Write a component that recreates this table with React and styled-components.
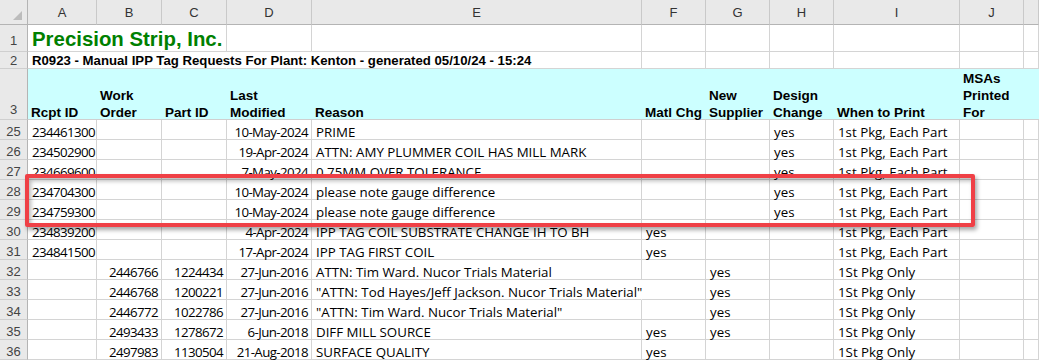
import React from 'react';
import styled, { createGlobalStyle } from 'styled-components';

const COLS = '28px 69px 65px 65px 85px 330px 64px 64px 64px 126px 64px 1fr';
const GRID = '#d4d4d4';

const GlobalStyle = createGlobalStyle`
  html, body { margin: 0; padding: 0; background: #ffffff; overflow: hidden; }
  * { box-sizing: border-box; }
`;

const Sheet = styled.div`
  position: relative;
  width: 1039px;
  background: #ffffff;
`;

const Row = styled.div`
  display: grid;
  grid-template-columns: ${COLS};
  height: ${(p) => p.$h}px;
`;

const Corner = styled.div`
  background: #e9e9e9;
  border-right: 1px solid #b4b4b4;
  border-bottom: 1px solid #b4b4b4;
  display: flex;
  align-items: flex-end;
  justify-content: flex-end;
  padding: 0 5px 4px 0;
`;

const ColLetter = styled.div`
  background: #e9e9e9;
  border-right: 1px solid #c9c9c9;
  border-bottom: 1px solid #b4b4b4;
  display: flex;
  align-items: center;
  justify-content: center;
  padding-top: 1px;
  font: 13px "Liberation Sans", Arial, sans-serif;
  color: #333333;
`;

const RowNum = styled.div`
  background: #e9e9e9;
  border-right: 1px solid #b4b4b4;
  border-bottom: 1px solid #cfcfcf;
  display: flex;
  align-items: flex-end;
  justify-content: center;
  padding-bottom: ${(p) => p.$pb ?? 0}px;
  font: 13px/13px "Liberation Sans", Arial, sans-serif;
  color: #444444;
`;

const Cell = styled.div`
  position: relative;
  display: flex;
  align-items: flex-end;
  justify-content: ${(p) => (p.$align === 'right' ? 'flex-end' : 'flex-start')};
  border-right: 1px solid ${(p) => (p.$noRight ? 'transparent' : GRID)};
  border-bottom: 1px solid ${GRID};
  padding: 0 3px ${(p) => p.$pb ?? 0}px ${(p) => (p.$align === 'right' ? 3 : 4)}px;
  white-space: nowrap;
  min-width: 0;
  font: 13.3px/13px "Open Sans", "Noto Sans", sans-serif;
  letter-spacing: ${(p) => (p.$num ? '-0.6px' : '0')};
  color: #000000;
`;

const Title = styled.span`
  font: bold 20.4px/20px "Liberation Sans", Arial, sans-serif;
  color: #008000;
`;

const Subtitle = styled.span`
  font: bold 13.2px/13px "Liberation Sans", Arial, sans-serif;
  color: #000000;
`;

const HeadCell = styled.div`
  background: #ccffff;
  border-bottom: 1px solid #d0d0d0;
  display: flex;
  align-items: flex-end;
  padding: 0 3px;
  white-space: nowrap;
  min-width: 0;
`;

const HeadText = styled.span`
  font: bold 13.5px/17px "Liberation Sans", Arial, sans-serif;
  color: #000000;
  margin-bottom: -2px;
`;

const Highlight = styled.div`
  position: absolute;
  left: 25px;
  top: 174px;
  width: 950px;
  height: 53px;
  border: 4px solid #ef4046;
  border-radius: 2px;
  box-shadow: 2px 3px 4px rgba(0, 0, 0, 0.35), inset 2px 3px 4px rgba(0, 0, 0, 0.28);
  pointer-events: none;
`;

const Triangle = () => (
  <svg width="9" height="9" viewBox="0 0 9 9">
    <polygon points="9,0 9,9 0,9" fill="#bcbcbc" />
  </svg>
);

const LETTERS = ['A', 'B', 'C', 'D', 'E', 'F', 'G', 'H', 'I', 'J', ''];

const HEADS = [
  ['Rcpt ID'],
  ['Work', 'Order'],
  ['Part ID'],
  ['Last', 'Modified'],
  ['Reason'],
  ['Matl Chg'],
  ['New', 'Supplier'],
  ['Design', 'Change'],
  ['When to Print'],
  ['MSAs', 'Printed', 'For'],
  [''],
];

const EACH = '1st Pkg, Each Part';
const ONLY = '1St Pkg Only';

const DATA = [
  [25, '234461300', '', '', '10-May-2024', 'PRIME', '', '', 'yes', EACH],
  [26, '234502900', '', '', '19-Apr-2024', 'ATTN: AMY PLUMMER COIL HAS MILL MARK', '', '', 'yes', EACH],
  [27, '234669600', '', '', '7-May-2024', '0.75MM OVER TOLERANCE', '', '', 'yes', EACH],
  [28, '234704300', '', '', '10-May-2024', 'please note gauge difference', '', '', 'yes', EACH],
  [29, '234759300', '', '', '10-May-2024', 'please note gauge difference', '', '', 'yes', EACH],
  [30, '234839200', '', '', '4-Apr-2024', 'IPP TAG COIL SUBSTRATE CHANGE IH TO BH', 'yes', '', '', EACH],
  [31, '234841500', '', '', '17-Apr-2024', 'IPP TAG FIRST COIL', 'yes', '', '', EACH],
  [32, '', '2446766', '1224434', '27-Jun-2016', 'ATTN: Tim Ward. Nucor Trials Material', '', 'yes', '', ONLY],
  [33, '', '2446768', '1200221', '27-Jun-2016', '"ATTN: Tod Hayes/Jeff Jackson. Nucor Trials Material"', '', 'yes', '', ONLY],
  [34, '', '2446772', '1022786', '27-Jun-2016', '"ATTN: Tim Ward. Nucor Trials Material"', '', 'yes', '', ONLY],
  [35, '', '2493433', '1278672', '6-Jun-2018', 'DIFF MILL SOURCE', 'yes', 'yes', '', ONLY],
  [36, '', '2497983', '1130504', '21-Aug-2018', 'SURFACE QUALITY', 'yes', '', '', ONLY],
];

export default function App() {
  return (
    <>
      <GlobalStyle />
      <Sheet>
        <Row $h={25}>
          <Corner>
            <Triangle />
          </Corner>
          {LETTERS.map((l, i) => (
            <ColLetter key={i}>{l}</ColLetter>
          ))}
        </Row>

        <Row $h={27}>
          <RowNum $pb={4}>1</RowNum>
          <Cell $noRight $pb={2}>
            <Title>Precision Strip, Inc.</Title>
          </Cell>
          <Cell $noRight />
          {Array.from({ length: 9 }).map((_, i) => (
            <Cell key={i} />
          ))}
        </Row>

        <Row $h={17}>
          <RowNum $pb={1}>2</RowNum>
          <Cell $noRight $pb={1}>
            <Subtitle>R0923 - Manual IPP Tag Requests For Plant: Kenton - generated 05/10/24 - 15:24</Subtitle>
          </Cell>
          <Cell $noRight />
          <Cell $noRight />
          <Cell $noRight />
          {Array.from({ length: 7 }).map((_, i) => (
            <Cell key={i} />
          ))}
        </Row>

        <Row $h={51}>
          <RowNum $pb={3}>3</RowNum>
          {HEADS.map((lines, i) => (
            <HeadCell key={i}>
              <HeadText>
                {lines.map((t, j) => (
                  <React.Fragment key={j}>
                    {j > 0 && <br />}
                    {t}
                  </React.Fragment>
                ))}
              </HeadText>
            </HeadCell>
          ))}
        </Row>

        {DATA.map(([n, a, b, c, d, e, f, g, h, w]) => (
          <Row $h={20} key={n}>
            <RowNum $pb={1}>{n}</RowNum>
            <Cell $num>{a}</Cell>
            <Cell $num $align="right">{b}</Cell>
            <Cell $num $align="right">{c}</Cell>
            <Cell $num $align="right">{d}</Cell>
            <Cell $noRight={e.length > 50}>{e}</Cell>
            <Cell>{f}</Cell>
            <Cell>{g}</Cell>
            <Cell>{h}</Cell>
            <Cell>{w}</Cell>
            <Cell />
            <Cell />
          </Row>
        ))}

        <Highlight />
      </Sheet>
    </>
  );
}
